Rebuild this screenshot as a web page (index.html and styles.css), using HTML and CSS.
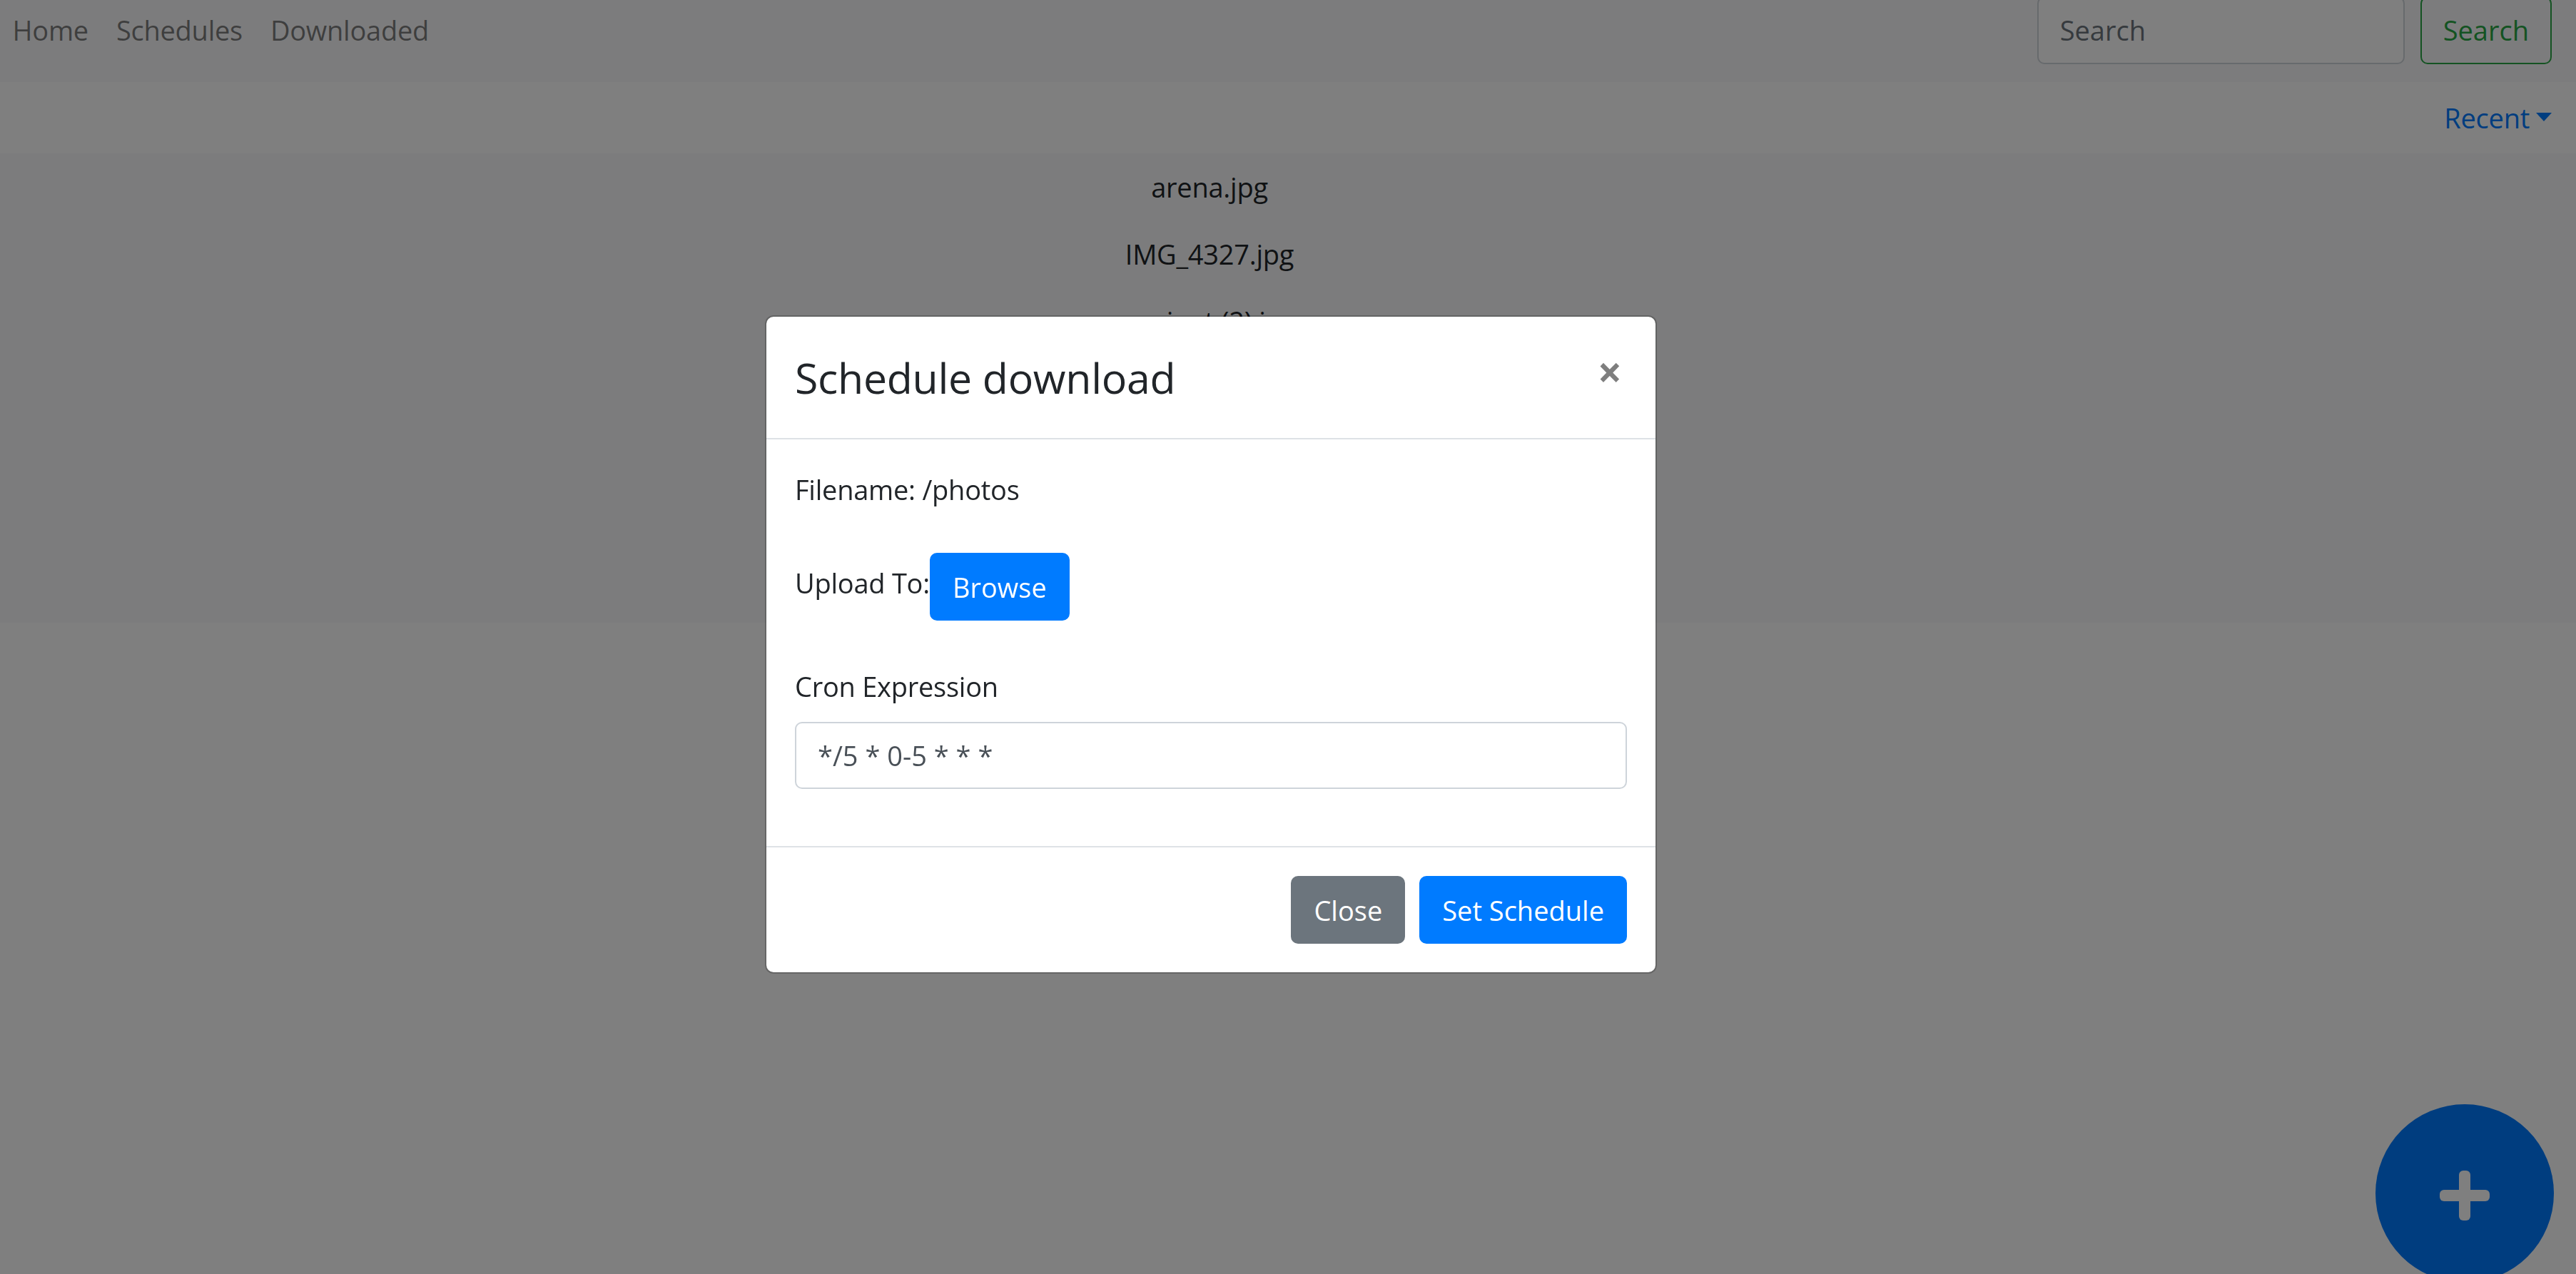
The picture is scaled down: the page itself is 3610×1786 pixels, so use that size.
FILE: index.html
```html
<!DOCTYPE html>
<html lang="en">
<head>
<meta charset="utf-8">
<title>Schedule download</title>
<link rel="stylesheet" href="styles.css">
</head>
<body>
<div class="page">
  <nav class="navbar">
    <ul class="nav-list">
      <li><a class="nav-link" href="#">Home</a></li>
      <li><a class="nav-link" href="#">Schedules</a></li>
      <li><a class="nav-link" href="#">Downloaded</a></li>
    </ul>
    <form class="search-form">
      <input class="search-input" type="search" placeholder="Search">
      <button class="btn btn-outline-success" type="button">Search</button>
    </form>
  </nav>
  <div class="sortbar">
    <a class="dropdown-toggle" href="#">Recent</a>
  </div>
  <div class="file-list">
    <div class="file-item">arena.jpg</div>
    <div class="file-item">IMG_4327.jpg</div>
    <div class="file-item">ancient (2).jpg</div>
  </div>
</div>

<button class="fab" type="button" aria-label="Add">
  <svg class="fab-icon" viewBox="0 0 70 70" width="70" height="70" aria-hidden="true">
    <rect x="27" y="0" width="16" height="70" rx="6" fill="#fff"/>
    <rect x="0" y="27" width="70" height="16" rx="6" fill="#fff"/>
  </svg>
</button>

<div class="backdrop"></div>

<div class="modal">
  <div class="modal-content">
    <div class="modal-header">
      <div class="modal-title">Schedule download</div>
      <button class="close" type="button" aria-label="Close">×</button>
    </div>
    <div class="modal-body">
      <p class="filename">Filename: /photos</p>
      <div class="upload-row">
        <span class="upload-label">Upload To:</span>
        <button class="btn btn-primary" type="button">Browse</button>
      </div>
      <div class="form-group">
        <label class="form-label" for="cron">Cron Expression</label>
        <input class="form-control" id="cron" type="text" value="*/5 * 0-5 * * *">
      </div>
    </div>
    <div class="modal-footer">
      <button class="btn btn-secondary" type="button">Close</button>
      <button class="btn btn-primary" type="button">Set Schedule</button>
    </div>
  </div>
</div>
</body>
</html>
```

FILE: styles.css
```css
* {
  box-sizing: border-box;
}

html,
body {
  margin: 0;
  padding: 0;
}

body {
  font-family: "Open Sans", "Noto Sans", sans-serif;
  font-size: 38px;
  line-height: 60px;
  letter-spacing: -0.25px;
  color: #212529;
  background: #fff;
  overflow: hidden;
  height: 1786px;
}

.page {
  margin-top: -28px;
}

/* ---------- navbar ---------- */
.navbar {
  display: flex;
  align-items: center;
  justify-content: space-between;
  background: #f8f9fa;
  padding: 20px 34px 23px 0;
}

.nav-list {
  display: flex;
  list-style: none;
  margin: 0 0 0 -2px;
  padding: 0;
}

.nav-link {
  display: block;
  padding: 20px 19.5px;
  color: rgba(0, 0, 0, 0.5);
  text-decoration: none;
}

.search-form {
  display: flex;
  align-items: center;
  gap: 22px;
  margin: 0;
}

.search-input {
  width: 515px;
  height: 95px;
  padding: 15px 30px;
  font: inherit;
  line-height: 60px;
  color: #495057;
  background: #fff;
  border: 2px solid #ced4da;
  border-radius: 10px;
  outline: none;
}

.search-input::placeholder {
  color: #6c757d;
}

/* ---------- buttons ---------- */
.btn {
  display: inline-block;
  font: inherit;
  line-height: 60px;
  padding: 15.5px 30px;
  border: 2px solid transparent;
  border-radius: 10px;
  background: transparent;
  cursor: pointer;
  white-space: nowrap;
}

.btn-outline-success {
  color: #28a745;
  border-color: #28a745;
}

.btn-primary {
  color: #fff;
  background: #007bff;
  border-color: #007bff;
}

.btn-secondary {
  color: #fff;
  background: #6c757d;
  border-color: #6c757d;
}

/* ---------- sort bar ---------- */
.sortbar {
  display: flex;
  justify-content: flex-end;
  padding: 20px 34px;
  background: #fff;
}

.dropdown-toggle {
  color: #007bff;
  text-decoration: none;
}

.dropdown-toggle::after {
  content: "";
  display: inline-block;
  margin-left: 9px;
  vertical-align: 10px;
  border-top: 12px solid;
  border-right: 11px solid transparent;
  border-left: 11px solid transparent;
  border-bottom: 0;
}

/* ---------- file list ---------- */
.file-list {
  background: #f8f9fa;
  padding-right: 220px;
  min-height: 658px;
  text-align: center;
}

.file-item {
  height: 94px;
  padding: 17px 0;
}

/* ---------- floating action button ---------- */
.fab {
  position: fixed;
  right: 31px;
  bottom: -12px;
  width: 250px;
  height: 250px;
  border-radius: 50%;
  border: 0;
  padding: 0;
  background: #007bff;
  display: flex;
  align-items: center;
  justify-content: center;
}

.fab-icon {
  display: block;
  margin-top: 6px;
}

/* ---------- modal ---------- */
.backdrop {
  position: fixed;
  inset: 0;
  background: rgba(0, 0, 0, 0.5);
}

.modal {
  position: fixed;
  inset: 0;
  display: flex;
  justify-content: center;
  align-items: flex-start;
  padding: 442px 216px 0 0;
}

.modal-content {
  width: 1250px;
  background: #fff;
  background-clip: padding-box;
  border: 2px solid rgba(0, 0, 0, 0.2);
  border-radius: 12px;
}

.modal-header {
  display: flex;
  align-items: flex-start;
  justify-content: space-between;
  padding: 40px;
  border-bottom: 2px solid #dee2e6;
}

.modal-title {
  margin: 0;
  font-size: 59px;
  line-height: 90px;
  font-weight: 500;
  letter-spacing: -0.3px;
}

.close {
  font-family: "Open Sans", "Noto Sans", sans-serif;
  font-size: 60px;
  font-weight: 700;
  line-height: 1;
  color: #000;
  opacity: 0.5;
  text-shadow: 0 2px 0 #fff;
  background: transparent;
  border: 0;
  padding: 40px;
  margin: -33px -33px -40px auto;
  cursor: pointer;
}

.modal-body {
  padding: 40px;
}

.filename {
  margin: 0 0 59px;
}

.upload-row {
  display: flex;
  align-items: flex-start;
}

.upload-label {
  margin-top: 12px;
}

.form-group {
  margin: 62px 0 40px;
}

.form-label {
  display: block;
  margin-bottom: 20px;
}

.form-control {
  display: block;
  width: 100%;
  height: 94px;
  padding: 15px 30px;
  font: inherit;
  line-height: 60px;
  color: #495057;
  background: #fff;
  border: 2px solid #ced4da;
  border-radius: 10px;
  outline: none;
}

.modal-footer {
  display: flex;
  justify-content: flex-end;
  align-items: center;
  padding: 30px;
  border-top: 2px solid #dee2e6;
}

.modal-footer .btn {
  margin: 10px;
}
```
